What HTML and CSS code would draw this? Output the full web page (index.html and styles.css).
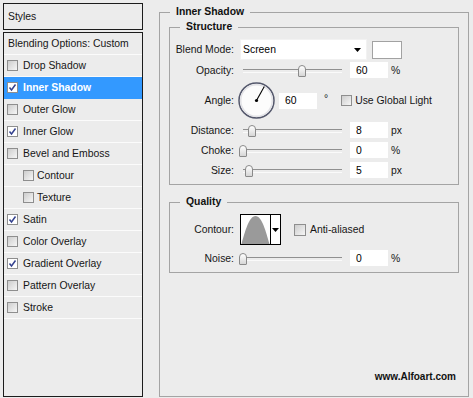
FILE: index.html
```html
<!DOCTYPE html>
<html lang="en">
<head>
    <meta charset="UTF-8">
    <title>Layer Style - Inner Shadow</title>
    <link rel="stylesheet" href="styles.css">
</head>
<body>

    <!-- Lista de estilos -->
    <div class="styles-panel">
        <div class="styles-head">Styles</div>
        <ul class="style-list">
            <li class="style-item blending">Blending Options: Custom</li>
            <li class="style-item"><span class="check"></span>Drop Shadow</li>
            <li class="style-item active"><span class="check on"><svg viewBox="0 0 9 9"><polyline points="1.5,4.5 3.5,7 7.5,1.5"/></svg></span>Inner Shadow</li>
            <li class="style-item"><span class="check"></span>Outer Glow</li>
            <li class="style-item"><span class="check on"><svg viewBox="0 0 9 9"><polyline points="1.5,4.5 3.5,7 7.5,1.5"/></svg></span>Inner Glow</li>
            <li class="style-item"><span class="check"></span>Bevel and Emboss</li>
            <li class="style-item sub"><span class="check"></span>Contour</li>
            <li class="style-item sub"><span class="check"></span>Texture</li>
            <li class="style-item"><span class="check on"><svg viewBox="0 0 9 9"><polyline points="1.5,4.5 3.5,7 7.5,1.5"/></svg></span>Satin</li>
            <li class="style-item"><span class="check"></span>Color Overlay</li>
            <li class="style-item"><span class="check on"><svg viewBox="0 0 9 9"><polyline points="1.5,4.5 3.5,7 7.5,1.5"/></svg></span>Gradient Overlay</li>
            <li class="style-item"><span class="check"></span>Pattern Overlay</li>
            <li class="style-item"><span class="check"></span>Stroke</li>
        </ul>
    </div>

    <!-- Opciones del efecto -->
    <div class="settings">
        <div class="group outer">
            <div class="group-title">Inner Shadow</div>

            <div class="group structure">
                <div class="group-title">Structure</div>

                <div class="row row-blend">
                    <span class="label">Blend Mode:</span>
                    <div class="select">
                        <span>Screen</span>
                        <svg class="arrow" viewBox="0 0 7 4"><polygon points="0,0 7,0 3.5,4"/></svg>
                    </div>
                    <span class="swatch"></span>
                </div>

                <div class="row row-opacity">
                    <span class="label">Opacity:</span>
                    <div class="slider"><div class="rail"><span class="thumb" style="left: 60%"></span></div></div>
                    <input class="field" type="text" value="60">
                    <span class="unit">%</span>
                </div>

                <div class="row row-angle">
                    <span class="label">Angle:</span>
                    <svg class="dial" viewBox="0 0 37 37">
                        <circle cx="18.5" cy="18.5" r="17.5" fill="#fcfcfc" stroke="#54586c" stroke-width="1.5"/>
                        <circle cx="18.5" cy="18.5" r="15.8" fill="none" stroke="#e2e2e6" stroke-width="1.5"/>
                        <line x1="18.5" y1="18.5" x2="26.3" y2="4.6" stroke="#000" stroke-width="1.1"/>
                        <circle cx="18.5" cy="18.5" r="1.6" fill="#000"/>
                    </svg>
                    <input class="field angle-field" type="text" value="60">
                    <span class="degree">°</span>
                    <span class="check global"></span>
                    <span class="check-label">Use Global Light</span>
                </div>

                <div class="row row-distance">
                    <span class="label">Distance:</span>
                    <div class="slider"><div class="rail"><span class="thumb" style="left: 9%"></span></div></div>
                    <input class="field" type="text" value="8">
                    <span class="unit">px</span>
                </div>

                <div class="row row-choke">
                    <span class="label">Choke:</span>
                    <div class="slider"><div class="rail"><span class="thumb" style="left: 0%"></span></div></div>
                    <input class="field" type="text" value="0">
                    <span class="unit">%</span>
                </div>

                <div class="row row-size">
                    <span class="label">Size:</span>
                    <div class="slider"><div class="rail"><span class="thumb" style="left: 6%"></span></div></div>
                    <input class="field" type="text" value="5">
                    <span class="unit">px</span>
                </div>
            </div>

            <div class="group quality">
                <div class="group-title">Quality</div>

                <div class="row row-contour">
                    <span class="label">Contour:</span>
                    <div class="contour">
                        <svg class="curve" viewBox="0 0 29 29" preserveAspectRatio="none">
                            <path d="M0.5,29 C4,17 8,1 14.5,1 C21,1 25,17 28.5,29 Z" fill="#9a9a9a"/>
                        </svg>
                        <span class="contour-drop">
                            <svg viewBox="0 0 7 4"><polygon points="0,0 7,0 3.5,4"/></svg>
                        </span>
                    </div>
                    <span class="check anti"></span>
                    <span class="check-label">Anti-aliased</span>
                </div>

                <div class="row row-noise">
                    <span class="label">Noise:</span>
                    <div class="slider"><div class="rail"><span class="thumb" style="left: 0%"></span></div></div>
                    <input class="field" type="text" value="0">
                    <span class="unit">%</span>
                </div>
            </div>

            <div class="watermark">www.Alfoart.com</div>
        </div>
    </div>

</body>
</html>
```

FILE: styles.css
```css
* {
    box-sizing: border-box;
}

body {
    margin: 0;
    padding: 3px 4px 0 3px;
    width: 473px;
    height: 398px;
    overflow: hidden;
    background-color: #ececec;
    font-family: 'Liberation Sans', Arial, sans-serif;
    font-size: 10.4px;
    color: #161616;
    display: flex;
    gap: 16px;
}

/* Panel izquierdo */
.styles-panel {
    width: 140px;
    display: flex;
    flex-direction: column;
}

.styles-head {
    height: 27px;
    border: 1px solid #1c1c1c;
    padding-left: 4px;
    line-height: 25px;
}

.style-list {
    list-style: none;
    margin: 2px 0 0;
    padding: 0;
    height: 365px;
    border: 1px solid #1c1c1c;
}

.style-item {
    height: 22px;
    border-bottom: 1px solid #fbfbfb;
    display: flex;
    align-items: center;
    gap: 5px;
    padding-left: 3px;
}

.style-item.blending {
    padding-left: 4px;
}

.style-item.sub {
    padding-left: 19px;
    gap: 3px;
}

.style-item.active {
    background-color: #3399ff;
    border-bottom-color: #3399ff;
    color: #fff;
    font-weight: bold;
}

.check {
    flex: none;
    width: 11px;
    height: 11px;
    border: 1px solid #8e8e8e;
    background: linear-gradient(135deg, #cdcdcd, #f6f6f6);
    display: flex;
}

.check.on {
    background: #fff;
}

.check svg {
    width: 9px;
    height: 9px;
    fill: none;
    stroke: #34428f;
    stroke-width: 1.5;
}

/* Panel derecho */
.settings {
    width: 310px;
    margin-top: 9px;
}

.group {
    border: 1px solid #a4a4a4;
    display: flex;
    flex-direction: column;
}

.group.outer {
    height: 385px;
}

.group-title {
    align-self: flex-start;
    height: 14px;
    line-height: 14px;
    margin: -8px 0 0 10px;
    padding: 0 6px;
    background-color: #ececec;
    font-weight: bold;
    color: #111;
}

.group.structure {
    margin: 8px 9px 0;
    padding-bottom: 6px;
}

.group.quality {
    margin: 17px 9px 0;
    padding-bottom: 6px;
}

.row {
    display: flex;
    align-items: center;
}

.label {
    flex: none;
    width: 64px;
    text-align: right;
}

.row-blend { margin-top: 5px; height: 21px; }
.row-opacity { margin-top: 2px; height: 16px; }
.row-angle { margin-top: 4px; height: 37px; }
.row-distance { margin-top: 3px; height: 16px; }
.row-choke { margin-top: 4px; height: 16px; }
.row-size { margin-top: 4px; height: 16px; }
.row-contour { margin-top: 5px; height: 31px; }
.row-noise { margin-top: 5px; height: 16px; }

.select {
    margin-left: 6px;
    width: 127px;
    height: 21px;
    background-color: #fff;
    border: 1px solid #f2f2f2;
    display: flex;
    align-items: center;
    justify-content: space-between;
    padding: 0 5px 0 2px;
    color: #000;
}

.arrow,
.contour-drop svg {
    width: 7px;
    height: 4px;
    fill: #000;
}

.swatch {
    margin-left: 5px;
    width: 30px;
    height: 18px;
    background-color: #fff;
    border: 1px solid #a2a2a2;
}

/* Deslizadores */
.slider {
    margin-left: 6px;
    width: 102px;
    padding-left: 3px;
}

.rail {
    position: relative;
    height: 16px;
}

.rail::before {
    content: '';
    position: absolute;
    left: 0;
    right: 0;
    top: 7px;
    height: 2px;
    border-top: 1px solid #909090;
    border-bottom: 1px solid #fafafa;
}

.thumb {
    position: absolute;
    top: 3px;
    width: 8px;
    height: 12px;
    margin-left: -4px;
    border: 1px solid #8a8a8a;
    border-radius: 4px 4px 1px 1px;
    background: linear-gradient(#ffffff, #d6d6d6);
}

.field {
    margin-left: 8px;
    width: 38px;
    height: 16px;
    border: none;
    padding: 0 0 0 6px;
    background-color: #fff;
    font: inherit;
    color: #000;
    outline: none;
}

.unit {
    margin-left: 3px;
}

/* Angulo */
.dial {
    margin-left: 4px;
    width: 37px;
    height: 37px;
    flex: none;
}

.angle-field {
    margin-left: 4px;
}

.degree {
    margin-left: 7px;
    margin-top: -4px;
}

.check.global {
    margin-left: 13px;
}

.check-label {
    margin-left: 3px;
}

/* Contorno */
.contour {
    margin-left: 6px;
    width: 41px;
    height: 31px;
    border: 1px solid #000;
    background-color: #fff;
    display: flex;
}

.curve {
    width: 29px;
    height: 29px;
}

.contour-drop {
    width: 10px;
    border-left: 1px solid #000;
    display: flex;
    align-items: center;
    justify-content: center;
}

.check.anti {
    margin-left: 13px;
    width: 12px;
    height: 12px;
}

.check.anti + .check-label {
    margin-left: 4px;
}

.watermark {
    margin: auto 12px 12px 0;
    align-self: flex-end;
    line-height: 14px;
    font-size: 10px;
    font-weight: bold;
    color: #111;
}
```
